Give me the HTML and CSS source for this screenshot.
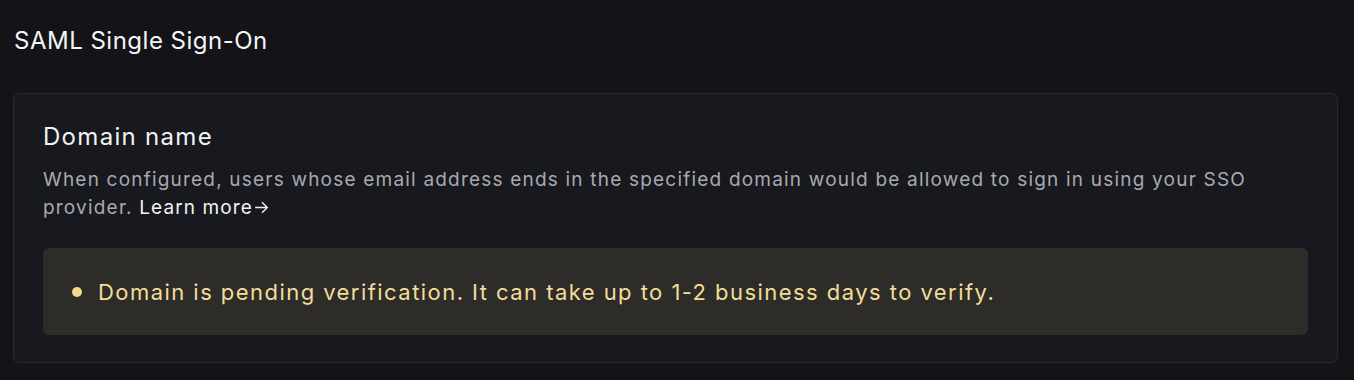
FILE: index.html
```html
<!DOCTYPE html>
<html lang="en">
<head>
<meta charset="utf-8">
<link rel="stylesheet" href="styles.css">
</head>
<body>
<div class="page">
  <h1 class="page-title">SAML Single Sign-On</h1>
  <section class="card">
    <h2 class="card-title">Domain name</h2>
    <p class="card-desc">When configured, users whose email address ends in the specified domain would be allowed to sign in using your SSO provider. <a class="learn" href="#">Learn more<svg class="arrow" viewBox="0 0 16 16" width="17" height="17"><path d="M2 8h11.5M8.5 3L13.5 8l-5 5" fill="none" stroke="currentColor" stroke-width="1.3"/></svg></a></p>
    <div class="alert">
      <span class="dot"></span>
      <span class="alert-text">Domain is pending verification. It can take up to 1-2 business days to verify.</span>
    </div>
  </section>
</div>
</body>
</html>
```
FILE: styles.css
```css
html, body {
  margin: 0;
  padding: 0;
  background: #131318;
  height: 100%;
}
body {
  font-family: Inter, "Noto Sans", sans-serif;
  color: #f2f2f4;
}
.page {
  padding: 25px 16px 0 13px;
}
.page-title {
  margin: 0 0 0 1px;
  font-size: 24px;
  font-weight: 400;
  letter-spacing: 0.5px;
  line-height: 32px;
  color: #f5f5f7;
}
.card {
  margin-top: 36px;
  background: #18191e;
  border: 1px solid #2a2b31;
  border-radius: 6px;
  padding: 28px 29px 27px 29px;
}
.card-title {
  margin: 0;
  font-size: 24px;
  font-weight: 400;
  letter-spacing: 1.3px;
  line-height: 30px;
  color: #f2f2f4;
}
.card-desc {
  margin: 14px 0 0 0;
  font-size: 19px;
  letter-spacing: 1.2px;
  line-height: 28px;
  color: #a8a9ae;
}
.learn {
  color: #f2f2f4;
  letter-spacing: 1.1px;
  text-decoration: none;
}
.arrow {
  vertical-align: -2px;
  margin-left: 0;
}
.alert {
  margin-top: 26px;
  background: #2e2c28;
  border-radius: 6px;
  height: 87px;
  display: flex;
  align-items: center;
  padding-left: 29px;
  gap: 16px;
}
.dot {
  width: 10px;
  height: 10px;
  border-radius: 50%;
  background: #f3d88c;
  flex: none;
}
.alert-text {
  font-size: 22px;
  letter-spacing: 1.45px;
  color: #f3dd9a;
}
```
